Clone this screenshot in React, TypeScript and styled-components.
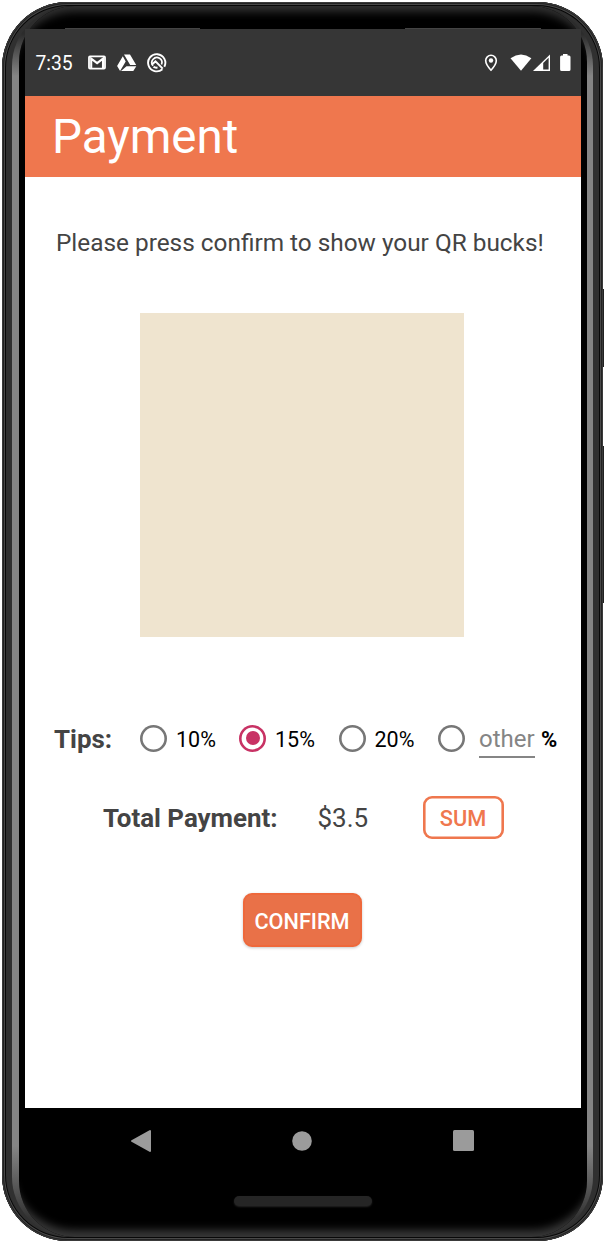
import React from "react";
import styled, { createGlobalStyle } from "styled-components";

const GlobalStyle = createGlobalStyle`
  *, *::before, *::after { box-sizing: border-box; }
  body { margin: 0; background: #fff; font-family: Roboto, sans-serif; }
`;

const Stage = styled.main`
  position: relative;
  width: 604px;
  height: 1242px;
  padding: 2px 1px 1px 2px;
  overflow: hidden;
`;

const SideKey = styled.span<{ $top: number; $height: number }>`
  position: absolute;
  right: 0;
  top: ${(p) => p.$top}px;
  width: 3px;
  height: ${(p) => p.$height}px;
  background: #222;
`;

const Phone = styled.div`
  position: relative;
  height: 1239px;
  padding: 4px 10px;
  border-radius: 66px;
  background: #303030;
  box-shadow: inset 0 0 0 1px #3a3a3a, inset 0 0 0 2px #222, inset 0 0 0 3px #484848,
    inset 0 0 0 4px #080808;
`;

const Rail = styled.div`
  height: 1231px;
  padding: 0 6px 0 7px;
  border-radius: 60px;
  background: linear-gradient(#2c2c2c 28px, #858585 70px, #858585 1140px, #333 1212px);
`;

const Glass = styled.div`
  height: 1231px;
  padding: 23px 6px 0;
  border-radius: 56px;
  background: linear-gradient(#444, #444) 46px 22px / 135px 1px no-repeat,
    linear-gradient(#444, #444) 386px 22px / 136px 1px no-repeat, #000;
  box-shadow: inset 0 14px 9px -8px #303030, inset 0 -15px 9px -8px #383838;
`;

const Screen = styled.div`
  position: relative;
  width: 556px;
  height: 1079px;
  background: #fff;
`;

const StatusBar = styled.header`
  display: flex;
  align-items: center;
  height: 67px;
  padding: 1px 10px 0 10.5px;
  background: #363636;
  color: #fff;
`;

const Clock = styled.time`
  width: 51.5px;
  padding-top: 1px;
  font-size: 19.3px;
  line-height: 24px;
`;

const StatusIcons = styled.div`
  display: flex;
  align-items: center;
  svg { display: block; }
`;

const Spacer = styled.div`
  flex: 1;
`;

const AppBar = styled.div`
  height: 81px;
  padding: 13px 0 0 27px;
  background: #ef774e;
  color: #fff;
`;

const Title = styled.h1`
  margin: 0;
  font-size: 47.5px;
  line-height: 56px;
  font-weight: 400;
`;

const Content = styled.section`
  display: flex;
  flex-direction: column;
  padding-top: 51px;
`;

const Message = styled.p`
  margin: 0 0 0 31px;
  font-size: 24.37px;
  line-height: 30px;
  white-space: nowrap;
  color: #444;
`;

const QrArea = styled.div`
  width: 324px;
  height: 324px;
  margin: 55px 0 0 115px;
  background: #efe4cf;
`;

const TipsRow = styled.div`
  display: flex;
  align-items: center;
  height: 42px;
  margin-top: 81px;
  padding-left: 29px;
`;

const Label = styled.span<{ $width: number }>`
  width: ${(p) => p.$width}px;
  flex: none;
  font-size: 25.9px;
  line-height: 30px;
  font-weight: 700;
  white-space: nowrap;
  color: #444;
`;

const Option = styled.label<{ $width: number }>`
  display: flex;
  align-items: center;
  gap: 9px;
  width: ${(p) => p.$width}px;
  flex: none;
  padding-top: 2px;
  font-size: 21.5px;
  line-height: 26px;
  color: #000;
`;

const Radio = styled.span<{ $checked?: boolean }>`
  display: flex;
  align-items: center;
  justify-content: center;
  width: 27px;
  height: 27px;
  flex: none;
  margin-bottom: 4px;
  box-shadow: inset 0 0 0 2.6px ${(p) => (p.$checked ? "#c83264" : "#777")};
  border-radius: 50%;
  &::after {
    content: "";
    width: 14px;
    height: 14px;
    border-radius: 50%;
    background: ${(p) => (p.$checked ? "#c83264" : "transparent")};
  }
`;

const OtherField = styled.span`
  width: 56px;
  height: 38px;
  margin-left: 1px;
  padding-top: 5px;
  border-bottom: 2px solid #858585;
  font-size: 24px;
  line-height: 28px;
  color: #858585;
`;

const Percent = styled.span`
  margin-left: 6px;
  padding-top: 2px;
  font-size: 22px;
  line-height: 26px;
  font-weight: 700;
`;

const TotalRow = styled.div`
  display: flex;
  align-items: center;
  height: 43px;
  margin-top: 36px;
  padding-left: 78px;
`;

const Amount = styled.span`
  width: 105px;
  padding-top: 1px;
  font-size: 26px;
  line-height: 30px;
  color: #444;
`;

const SumButton = styled.button`
  width: 81px;
  height: 43px;
  padding: 2px 0 0;
  border: 0;
  border-radius: 9px;
  box-shadow: inset 0 0 0 2.6px #ef774e;
  background: #fff;
  color: #ef774e;
  font: 500 21.8px/26px Roboto, sans-serif;
`;

const ConfirmButton = styled.button`
  width: 119px;
  height: 54px;
  margin: 54px 0 0 217.5px;
  padding: 3px 0 0;
  border: 2px solid #ee683b;
  border-radius: 9px;
  background: #e97148;
  color: #fff;
  font: 500 21.7px/26px Roboto, sans-serif;
  box-shadow: 0 1px 3px rgba(0, 0, 0, 0.22);
`;

const NavBar = styled.nav`
  display: flex;
  align-items: center;
  justify-content: space-between;
  height: 65px;
  padding: 0 107px 0 105px;
  svg { display: block; }
`;

const Speaker = styled.div`
  width: 138px;
  height: 10px;
  margin: 23px auto 0 209px;
  border-radius: 5px;
  background: #252525;
  box-shadow: 0 1px 2px #222;
`;

const tips = [
  { label: "10%", width: 99 },
  { label: "15%", width: 99.5, checked: true },
  { label: "20%", width: 99.5 },
];

const NotificationIcons = () => (
  <svg width="80" height="22" viewBox="0 0 80 22" fill="none">
    <rect x="2" y="4.4" width="16" height="12.2" rx="1" stroke="#fff" strokeWidth="1.8" />
    <path d="M4.200 17V6.600l5.900 4.600L16 6.600V17" stroke="#fff" strokeWidth="2.100" />
    <path d="M37 2.500h6l6.200 10.500h-6zM35.800 4.300l2.900 5.200-5.600 9.600-3-5.200zM39.500 14.300h9.800l-3 4.800H34z" fill="#fff" />
    <path d="M75.400 17.200A8.600 8.600 0 1 1 77.300 14.800" stroke="#fff" strokeWidth="1.9" />
    <path d="M66 13.700A5 5 0 1 1 74.500 12.500" stroke="#fff" strokeWidth="1.7" />
    <path d="M64.800 12.600l3.700-3.200 7.200 7.200M66.500 14.800q1.500 1.200 4 .800" stroke="#fff" strokeWidth="2" />
  </svg>
);

const SystemIcons = () => (
  <svg width="90" height="22" viewBox="0 0 90 22" fill="none">
    <path d="M10 3.300a5.300 5.300 0 0 0-5.300 5.300c0 4 5.300 9.600 5.300 9.600s5.300-5.600 5.300-9.600A5.300 5.300 0 0 0 10 3.300z" stroke="#fff" strokeWidth="1.6" />
    <circle cx="10" cy="8.500" r="2.2" fill="#fff" />
    <path d="M29.500 6.200Q40-1 50.400 6.200L40 18.800z" fill="#fff" />
    <path d="M52 19L69 2.500v16.500z" fill="#fff" />
    <path d="M62.200 11L67.600 5.800v11.700h-5.400z" fill="#363636" />
    <path d="M82 2h4.500v1.500H88q1.500 0 1.500 1.500v12.500q0 1.500-1.500 1.500h-7.400q-1.500 0-1.500-1.500V5q0-1.500 1.500-1.500H82z" fill="#fff" />
  </svg>
);

export default function App() {
  return (
    <Stage>
      <GlobalStyle />
      <SideKey $top={289} $height={78} />
      <SideKey $top={446} $height={157} />
      <Phone>
        <Rail>
          <Glass>
            <Screen>
              <StatusBar>
                <Clock>7:35</Clock>
                <StatusIcons>
                  <NotificationIcons />
                </StatusIcons>
                <Spacer />
                <StatusIcons>
                  <SystemIcons />
                </StatusIcons>
              </StatusBar>
              <AppBar>
                <Title>Payment</Title>
              </AppBar>
              <Content>
                <Message>Please press confirm to show your QR bucks!</Message>
                <QrArea />
                <TipsRow>
                  <Label $width={86}>Tips:</Label>
                  {tips.map((tip) => (
                    <Option key={tip.label} $width={tip.width}>
                      <Radio $checked={tip.checked} />
                      {tip.label}
                    </Option>
                  ))}
                  <Option $width={40}>
                    <Radio />
                  </Option>
                  <OtherField>other</OtherField>
                  <Percent>%</Percent>
                </TipsRow>
                <TotalRow>
                  <Label $width={214.5}>Total Payment:</Label>
                  <Amount>$3.5</Amount>
                  <SumButton>SUM</SumButton>
                </TotalRow>
                <ConfirmButton>CONFIRM</ConfirmButton>
              </Content>
            </Screen>
            <NavBar>
              <svg width="21" height="24" viewBox="0 0 21 24">
                <path d="M2 12L20 2v20z" fill="#9b9b9b" stroke="#9b9b9b" strokeWidth="2" strokeLinejoin="round" />
              </svg>
              <svg width="20" height="20" viewBox="0 0 20 20">
                <circle cx="10" cy="10" r="9.800" fill="#9b9b9b" />
              </svg>
              <svg width="21" height="21" viewBox="0 0 21 21">
                <rect width="21" height="21" rx="1.500" fill="#9b9b9b" />
              </svg>
            </NavBar>
            <Speaker />
          </Glass>
        </Rail>
      </Phone>
    </Stage>
  );
}
